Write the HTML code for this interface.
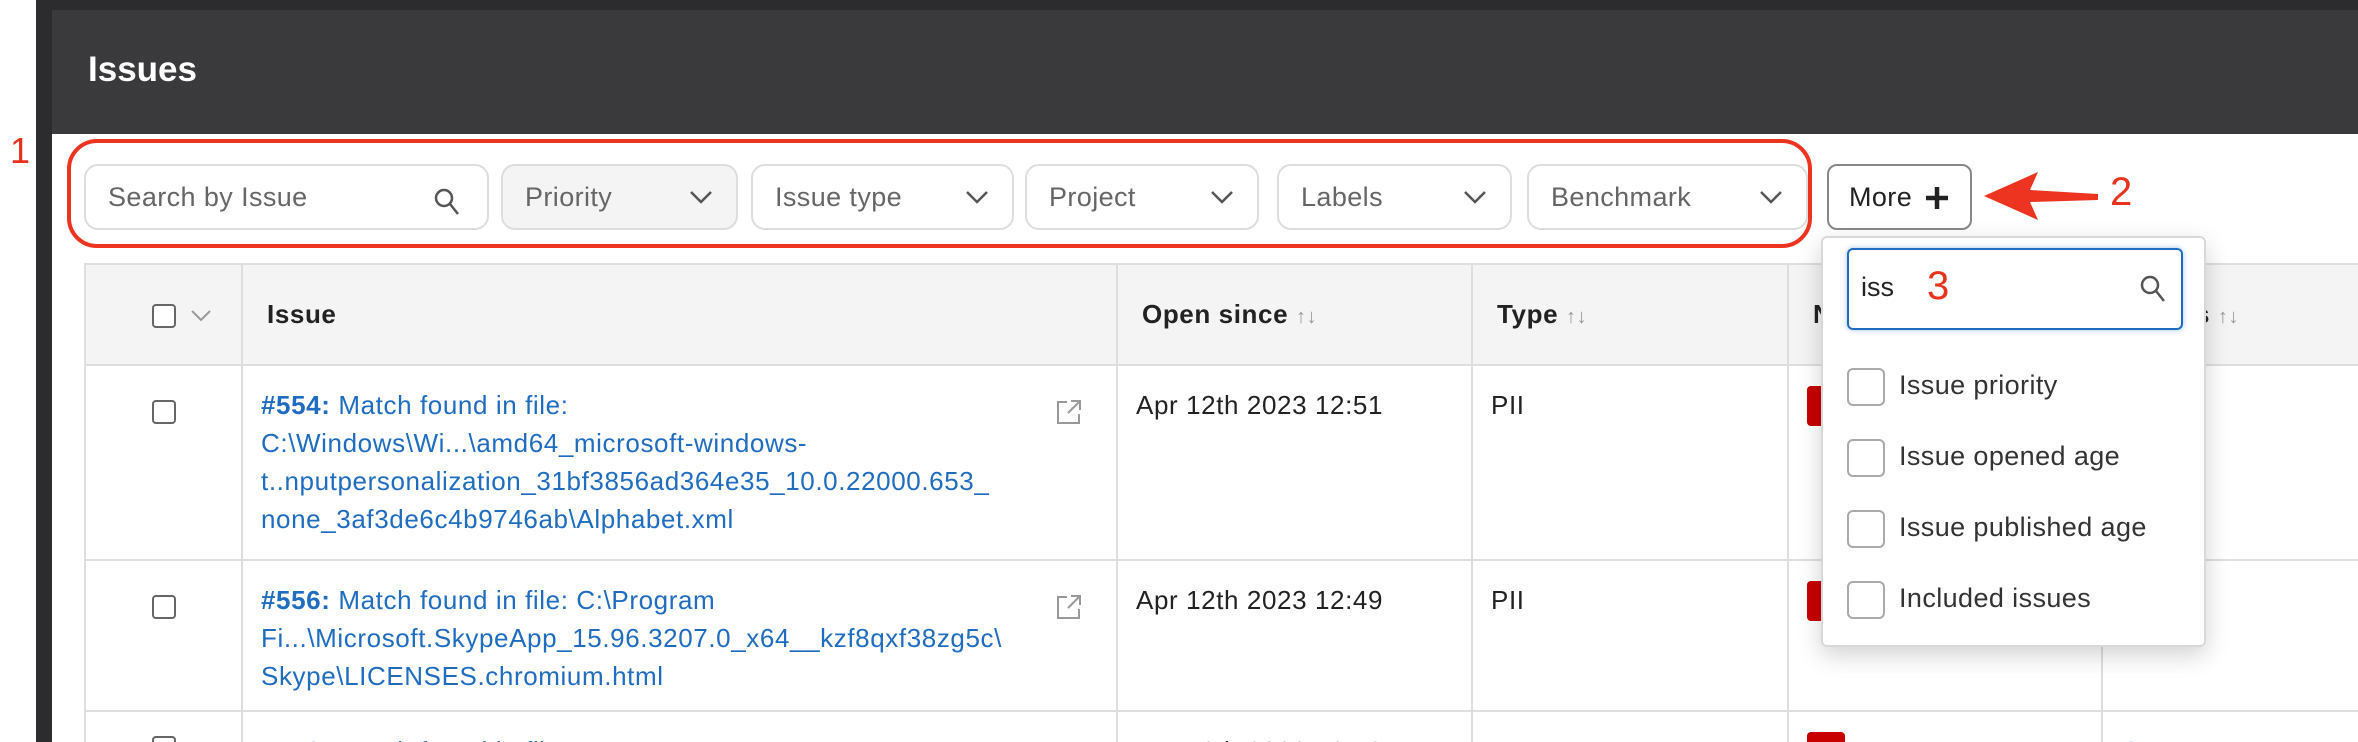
<!DOCTYPE html>
<html><head><meta charset="utf-8"><style>
*{box-sizing:border-box;margin:0;padding:0}
html,body{width:2358px;height:742px;overflow:hidden}
body{background:#fff;font-family:"Liberation Sans",sans-serif;color:#222}
#w{position:relative;width:2358px;height:742px;overflow:hidden}
.abs{position:absolute}
.frame{left:36px;top:0;width:2322px;height:742px;background:#2c2c2f}
.main{left:52px;top:10px;width:2306px;height:732px;background:#fff}
.hdr{left:52px;top:10px;width:2306px;height:124px;background:#3a3a3c;color:#fff;font-size:35px;font-weight:bold;padding:40px 0 0 36px}
.f{top:164px;height:66px;border:2px solid #ddd;border-radius:14px;background:#fff;font-size:27px;letter-spacing:.4px;color:#666;padding:0 0 0 22px;line-height:62px}
.f svg{position:absolute;top:22px}
.red{color:#e8321e}
table{border-collapse:collapse;position:absolute;left:84px;top:263px;font-size:26px;letter-spacing:.6px;table-layout:fixed;width:2290px}
td,th{border:2px solid #dedede;vertical-align:top;text-align:left}
th{background:#f4f4f4;height:101px;vertical-align:middle;font-weight:bold;padding-left:24px}
td{padding:20px 16px 0 18px;line-height:38px;white-space:nowrap}
a{color:#1f6cc0;text-decoration:none}
.cb{display:inline-block;width:24px;height:24px;border:2px solid #666;border-radius:4px;background:#fff}
.srt{color:#999;font-weight:normal;font-size:20px}
.dd{left:1821px;top:236px;width:385px;height:411px;background:#fff;border:2px solid #d8d8d8;border-radius:6px;box-shadow:0 8px 24px rgba(0,0,0,.18)}
.it{position:absolute;left:24px;font-size:27px;letter-spacing:.4px;color:#333;line-height:38px;white-space:nowrap}
.it .cb{width:38px;height:38px;border-color:#aaa;border-radius:6px;vertical-align:middle;margin-right:14px}
</style></head><body><div id="w">
<div class="abs frame"></div>
<div class="abs main"></div>
<div class="abs hdr">Issues</div>
<div class="abs red" style="left:10px;top:130px;font-size:36px">1</div>
<div class="abs" style="left:67px;top:139px;width:1745px;height:109px;border:4px solid #ec3420;border-radius:30px"></div>

<div class="abs f" style="left:84px;width:405px">Search by Issue<svg style="left:348px" width="26" height="28" viewBox="0 0 26 28"><circle cx="10" cy="10" r="8" fill="none" stroke="#555" stroke-width="2.5"/><path d="M16 16l8 10" stroke="#555" stroke-width="2.5"/></svg></div>
<div class="abs f" style="left:501px;width:237px;background:#f4f4f4">Priority<svg style="left:186px" width="24" height="18" viewBox="0 0 24 18"><path d="M2 4l10 10 10-10" fill="none" stroke="#555" stroke-width="2.5"/></svg></div>
<div class="abs f" style="left:751px;width:263px">Issue type<svg style="left:212px" width="24" height="18" viewBox="0 0 24 18"><path d="M2 4l10 10 10-10" fill="none" stroke="#555" stroke-width="2.5"/></svg></div>
<div class="abs f" style="left:1025px;width:234px">Project<svg style="left:183px" width="24" height="18" viewBox="0 0 24 18"><path d="M2 4l10 10 10-10" fill="none" stroke="#555" stroke-width="2.5"/></svg></div>
<div class="abs f" style="left:1277px;width:235px">Labels<svg style="left:184px" width="24" height="18" viewBox="0 0 24 18"><path d="M2 4l10 10 10-10" fill="none" stroke="#555" stroke-width="2.5"/></svg></div>
<div class="abs f" style="left:1527px;width:281px">Benchmark<svg style="left:230px" width="24" height="18" viewBox="0 0 24 18"><path d="M2 4l10 10 10-10" fill="none" stroke="#555" stroke-width="2.5"/></svg></div>
<div class="abs f" style="left:1827px;width:145px;border-color:#888;border-radius:10px;color:#222;padding-left:20px">More<svg style="left:96px;top:20px" width="24" height="24" viewBox="0 0 24 24"><path d="M12 1v22M1 12h22" stroke="#222" stroke-width="4.5"/></svg></div>
<svg class="abs" style="left:1980px;top:168px" width="120" height="56" viewBox="0 0 120 56"><path d="M118 26 L50 22 L58 4 L4 28 L58 52 L50 34 L118 32 Z" fill="#ec3420"/></svg>
<div class="abs red" style="left:2110px;top:170px;font-size:40px">2</div>

<table>
<colgroup><col style="width:157px"><col style="width:875px"><col style="width:355px"><col style="width:316px"><col style="width:314px"><col style="width:273px"></colgroup>
<tr><th style="padding-left:66px"><span class="cb" style="vertical-align:middle"></span> <svg width="22" height="14" viewBox="0 0 22 14" style="vertical-align:middle;margin-left:6px"><path d="M2 2l9 9 9-9" fill="none" stroke="#999" stroke-width="2"/></svg></th>
<th>Issue</th><th>Open since <span class="srt">↑↓</span></th><th>Type <span class="srt">↑↓</span></th><th>N</th><th>Status <span class="srt">↑↓</span></th></tr>
<tr style="height:195px"><td style="padding-left:66px;padding-top:30px"><span class="cb"></span></td><td style="position:relative;padding-right:70px"><a><b>#554:</b> Match found in file:<br>C:\Windows\Wi...\amd64_microsoft-windows-<br>t..nputpersonalization_31bf3856ad364e35_10.0.22000.653_<br>none_3af3de6c4b9746ab\Alphabet.xml</a><svg style="position:absolute;left:812px;top:32px" width="28" height="28" viewBox="0 0 28 28"><path d="M12 4H3v21h21v-9M16 3h9v9M25 3L13 15" fill="none" stroke="#999" stroke-width="2"/></svg></td><td>Apr 12th 2023 12:51</td><td>PII</td><td><span style="display:inline-block;width:24px;height:40px;background:#c80000;border-radius:4px"></span></td><td></td></tr>
<tr style="height:151px"><td style="padding-left:66px;padding-top:30px"><span class="cb"></span></td><td style="position:relative;padding-right:70px"><a><b>#556:</b> Match found in file: C:\Program<br>Fi...\Microsoft.SkypeApp_15.96.3207.0_x64__kzf8qxf38zg5c\<br>Skype\LICENSES.chromium.html</a><svg style="position:absolute;left:812px;top:32px" width="28" height="28" viewBox="0 0 28 28"><path d="M12 4H3v21h21v-9M16 3h9v9M25 3L13 15" fill="none" stroke="#999" stroke-width="2"/></svg></td><td>Apr 12th 2023 12:49</td><td>PII</td><td><span style="display:inline-block;width:24px;height:40px;background:#c80000;border-radius:4px"></span></td><td></td></tr>
<tr style="height:60px"><td style="padding-left:66px;padding-top:20px"><span class="cb"></span></td><td><a><b>#553:</b> Match found in file:</a></td><td>Apr 12th 2023 12:48</td><td>PII</td><td><span style="display:inline-block;width:38px;height:40px;background:#c80000;border-radius:4px"></span> 100</td><td><a>Open</a></td></tr>
</table>

<div class="abs dd">
<div class="abs" style="left:24px;top:10px;width:336px;height:82px;border:2px solid #1f6cc0;border-radius:6px;box-shadow:0 0 6px rgba(31,108,192,.4);font-size:27px;padding:22px 0 0 12px;color:#222">iss<span class="red" style="font-size:40px;position:absolute;left:78px;top:14px">3</span><svg style="position:absolute;left:290px;top:24px" width="28" height="30" viewBox="0 0 28 30"><circle cx="11" cy="11" r="8" fill="none" stroke="#555" stroke-width="2.5"/><path d="M17 17l8 10" stroke="#555" stroke-width="2.5"/></svg></div>
<div class="it" style="top:128px"><span class="cb"></span>Issue priority</div>
<div class="it" style="top:199px"><span class="cb"></span>Issue opened age</div>
<div class="it" style="top:270px"><span class="cb"></span>Issue published age</div>
<div class="it" style="top:341px"><span class="cb"></span>Included issues</div>
</div>
</div></body></html>
